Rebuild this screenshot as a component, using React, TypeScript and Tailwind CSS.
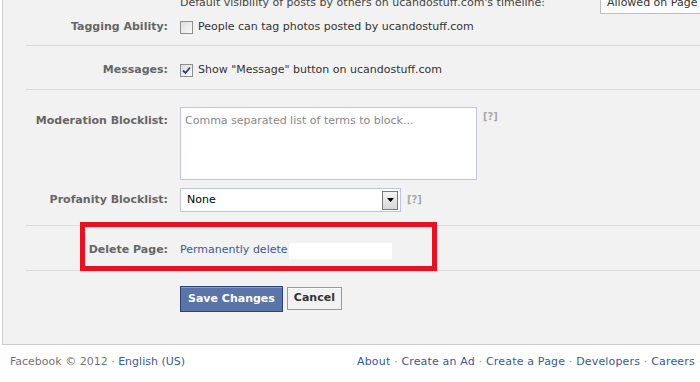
const font = { fontFamily: '"DejaVu Sans", Tahoma, Verdana, sans-serif' };

function Label({ children }: { children: React.ReactNode }) {
  return (
    <div className="w-[165px] shrink-0 text-right font-bold text-[#666] pr-0">{children}</div>
  );
}

function Checkbox({ checked }: { checked?: boolean }) {
  return (
    <span className="inline-flex w-[13px] h-[13px] border border-[#8f8f8f] bg-gradient-to-br from-[#dcdcdc] to-[#fbfbfb] items-center justify-center shrink-0">
      {checked && (
        <svg width="9" height="9" viewBox="0 0 9 9">
          <path d="M1 4.5 L3.5 7 L8 1.5" stroke="#2a3d8f" strokeWidth="1.8" fill="none" />
        </svg>
      )}
    </span>
  );
}

function Help() {
  return <span className="text-[#aaa] text-[10px] font-bold">[?]</span>;
}

export default function App() {
  return (
    <div className="w-[700px] h-[382px] bg-white overflow-hidden text-[11px] text-[#333]" style={font}>
      <div className="flow-root ml-[2px] h-[345px] bg-[#f2f2f2] border-l border-b border-[#cccccc] relative">
        {/* first section */}
        <div className="mt-[-10px] h-[26px] flex items-center">
          <div className="w-[165px] shrink-0" />
          <div className="ml-[12px] flex items-center whitespace-nowrap">
            <span className="text-[#444] w-[420px]">Default visibility of posts by others on ucandostuff.com's timeline:</span>
            <span className="h-[22px] w-[120px] bg-white border border-[#bdbdbd] pl-[6px] flex items-center">Allowed on Page</span>
          </div>
        </div>
        <div className="h-[22px] flex items-center">
          <Label>Tagging Ability:</Label>
          <div className="ml-[12px] flex items-center gap-[5px]">
            <Checkbox />
            <span>People can tag photos posted by ucandostuff.com</span>
          </div>
        </div>
        <div className="h-[7px]" />
        <div className="ml-[23px] border-t border-[#dadada]" />

        <div className="pt-[17px] pb-[12px]">
          <div className="h-[14px] flex items-center">
            <Label>Messages:</Label>
            <div className="ml-[12px] flex items-center gap-[5px]">
              <Checkbox checked />
              <span>Show "Message" button on ucandostuff.com</span>
            </div>
          </div>
        </div>
        <div className="ml-[23px] border-t border-[#dadada]" />

        <div className="pt-[17px] pb-[13px] flex flex-col gap-[8px]">
          <div className="flex items-start">
            <div className="pt-[6px]">
              <Label>Moderation Blocklist:</Label>
            </div>
            <div className="ml-[12px] w-[297px] h-[73px] bg-white border border-[#bdc7d8] px-[4px] pt-[5px] text-[#888]">
              Comma separated list of terms to block...
            </div>
            <div className="ml-[6px] pt-[2px]">
              <Help />
            </div>
          </div>
          <div className="flex items-center">
            <Label>Profanity Blocklist:</Label>
            <div className="ml-[12px] w-[221px] h-[24px] bg-white border border-[#bdc7d8] flex items-center justify-between pl-[6px] pr-[2px] text-black">
              <span>None</span>
              <span className="w-[16px] h-[19px] border border-[#7a7a7a] bg-gradient-to-b from-[#f4f4f4] to-[#d8d8d8] flex items-center justify-center">
                <svg width="7" height="4" viewBox="0 0 7 4">
                  <path d="M0 0 H7 L3.5 4 Z" fill="#000" />
                </svg>
              </span>
            </div>
            <div className="ml-[6px]">
              <Help />
            </div>
          </div>
        </div>
        <div className="ml-[23px] border-t border-[#dadada]" />

        <div className="h-[44px] flex items-center pt-[5px]">
          <Label>Delete Page:</Label>
          <div className="ml-[12px] flex items-center">
            <span className="text-[#3b5998]">Permanently delete</span>
            <span className="ml-[1px] w-[103px] h-[16px] bg-white" />
          </div>
        </div>
        <div className="ml-[23px] border-t border-[#dadada]" />

        <div className="pt-[15px] flex items-start">
          <div className="w-[165px] shrink-0" />
          <div className="ml-[12px] flex items-start gap-[4px]">
            <button className="h-[26px] px-[7px] bg-[#5b74a8] border border-[#29447e] text-white font-bold text-[11px] shadow-[inset_0_1px_0_#8a9cc2]" style={font}>
              Save Changes
            </button>
            <button className="mt-[1px] h-[23px] px-[6px] bg-[#f2f2f2] border border-[#999] text-[#333] font-bold text-[11px] shadow-[inset_0_1px_0_#fff]" style={font}>
              Cancel
            </button>
          </div>
        </div>

        <div className="absolute left-[77px] top-[222px] w-[357px] h-[49px] border-[5px] border-[#e3141f]" />
      </div>

      <div className="flex items-center h-[34px] whitespace-nowrap">
        <div className="w-[357px] shrink-0 pl-[10px] text-[#737373]">
          Facebook © 2012 · <span className="text-[#3b5998]">English (US)</span>
        </div>
        <div className="text-[#3b5998] tracking-[0.17px]">
          About <span className="text-[#999]">·</span> Create an Ad <span className="text-[#999]">·</span> Create a Page{' '}
          <span className="text-[#999]">·</span> Developers <span className="text-[#999]">·</span> Careers{' '}
          <span className="text-[#999]">·</span> Privacy <span className="text-[#999]">·</span> Terms
        </div>
      </div>
    </div>
  );
}
